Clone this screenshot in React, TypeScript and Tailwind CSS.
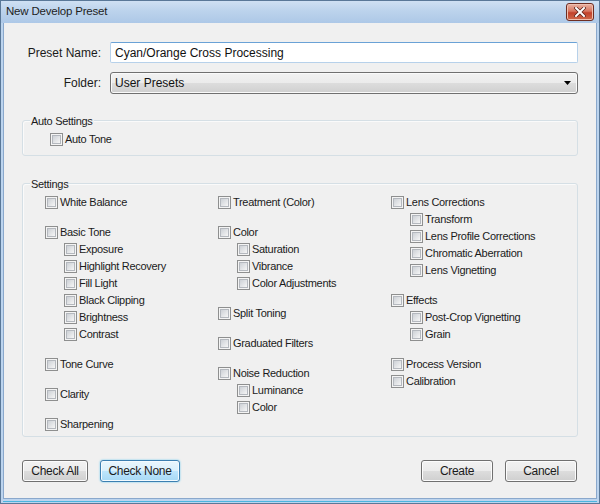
import React from "react";

function Box() {
  return (
    <span className="block w-[13px] h-[13px] shrink-0 border border-[#8e8f8f] bg-[#f4f4f4] p-[1px]">
      <span className="block w-full h-full border border-[#b4b8be] bg-gradient-to-br from-[#cdd1d6] to-[#f6f6f6]" />
    </span>
  );
}

function Item({ label, sub }: { label: string; sub?: boolean }) {
  return (
    <div className={sub ? "flex items-center h-[17px] gap-[2px] ml-[19px]" : "flex items-center h-[17px] gap-[2px]"}>
      <Box />
      <span className="text-[11px] tracking-[-0.3px] leading-none text-[#1b1b1b] whitespace-nowrap">{label}</span>
    </div>
  );
}

function Group({ main, subs = [] }: { main: string; subs?: string[] }) {
  return (
    <div className="flex flex-col">
      <Item label={main} />
      {subs.map((s) => (
        <Item key={s} label={s} sub />
      ))}
    </div>
  );
}

function Btn({ label, w, focus }: { label: string; w: string; focus?: boolean }) {
  return (
    <button
      className={
        focus
          ? `${w} h-[22px] rounded-[3px] border border-[#3c7fb1] bg-[linear-gradient(#eaf6fd,#d9f0fc_50%,#bee6fd_50%,#a7d9f5)] shadow-[inset_0_0_0_1px_#f4fbff,0_0_2px_#5ec6f0] text-[12px] tracking-[-0.3px] text-[#1b1b1b]`
          : `${w} h-[22px] rounded-[3px] border border-[#707070] bg-[linear-gradient(#f2f2f2,#ebebeb_50%,#dddddd_50%,#cfcfcf)] shadow-[inset_0_0_0_1px_#fcfcfc] text-[12px] tracking-[-0.3px] text-[#1b1b1b]`
      }
    >
      {label}
    </button>
  );
}

export default function App() {
  return (
    <div className="w-[600px] h-[504px] flex flex-col bg-[#bcd4ee] border border-[#5a7898] font-['Liberation_Sans',Arial,sans-serif] overflow-hidden">
      {/* title bar */}
      <div className="h-[22px] shrink-0 flex items-center pl-[5px] pr-[5px] bg-[linear-gradient(#cfe0f3,#bcd3ec_45%,#adc8e7)]">
        <span className="text-[11.5px] text-[#1e1e1e] tracking-[-0.2px]">New Develop Preset</span>
        <div className="ml-auto w-[28px] h-[18px] rounded-[3px] border border-[#6e2d22] bg-[linear-gradient(#eab3a4,#d7755f_45%,#c2412a_55%,#cf6a4c)] flex items-center justify-center shadow-[inset_0_0_0_1px_#f0c0b0]">
          <svg width="12" height="10" viewBox="0 0 12 10">
            <path d="M2 1 L10 9 M10 1 L2 9" stroke="#5a2018" strokeWidth="3.4" strokeLinecap="square" />
            <path d="M2 1 L10 9 M10 1 L2 9" stroke="#ffffff" strokeWidth="2" strokeLinecap="square" />
          </svg>
        </div>
      </div>

      {/* body */}
      <div className="flex-1 mx-[2px] mb-[2px] border-x border-b border-[#8aa8cc] bg-[#f0f0f0] px-[18px] pt-[19px] flex flex-col">
        {/* preset name */}
        <div className="flex items-center">
          <div className="w-[79px] text-right text-[12px] text-[#1b1b1b]">Preset Name:</div>
          <div className="ml-[9px] flex-1 h-[21px] rounded-[2px] border border-[#b7d1ea] border-t-[#6aa2d6] bg-white flex items-center pl-[4px] text-[12px] text-[#111]">
            Cyan/Orange Cross Processing
          </div>
        </div>
        {/* folder */}
        <div className="flex items-center mt-[9px]">
          <div className="w-[79px] text-right text-[12px] text-[#1b1b1b]">Folder:</div>
          <div className="ml-[9px] flex-1 h-[22px] rounded-[3px] border border-[#707070] bg-[linear-gradient(#f2f2f2,#ebebeb_50%,#dddddd_50%,#cfcfcf)] shadow-[inset_0_0_0_1px_#fafafa] flex items-center pl-[4px] pr-[6px] text-[12px] text-[#111]">
            <span>User Presets</span>
            <svg className="ml-auto" width="7" height="4" viewBox="0 0 7 4">
              <polygon points="0,0 7,0 3.5,4" fill="#000" />
            </svg>
          </div>
        </div>

        {/* auto settings */}
        <div className="relative mt-[26px] h-[36px] rounded-[3px] border border-[#d5dfe5] shadow-[inset_1px_1px_0_#fafafa] pl-[27px] pt-[10px]">
          <span className="absolute left-[7px] top-[-8px] px-[1px] bg-[#f0f0f0] text-[11px] tracking-[-0.3px] text-[#1b1b1b]">Auto Settings</span>
          <Item label="Auto Tone" />
        </div>

        {/* settings */}
        <div className="relative mt-[27px] h-[254px] rounded-[3px] border border-[#d5dfe5] shadow-[inset_1px_1px_0_#fafafa] pl-[22px] pt-[10px] grid grid-cols-[173px_173px_1fr]">
          <span className="absolute left-[7px] top-[-8px] px-[1px] bg-[#f0f0f0] text-[11px] tracking-[-0.3px] text-[#1b1b1b]">Settings</span>
          <div className="flex flex-col gap-[13px]">
            <Group main="White Balance" />
            <Group main="Basic Tone" subs={["Exposure", "Highlight Recovery", "Fill Light", "Black Clipping", "Brightness", "Contrast"]} />
            <Group main="Tone Curve" />
            <Group main="Clarity" />
            <Group main="Sharpening" />
          </div>
          <div className="flex flex-col gap-[13px]">
            <Group main="Treatment (Color)" />
            <Group main="Color" subs={["Saturation", "Vibrance", "Color Adjustments"]} />
            <Group main="Split Toning" />
            <Group main="Graduated Filters" />
            <Group main="Noise Reduction" subs={["Luminance", "Color"]} />
          </div>
          <div className="flex flex-col gap-[13px]">
            <Group main="Lens Corrections" subs={["Transform", "Lens Profile Corrections", "Chromatic Aberration", "Lens Vignetting"]} />
            <Group main="Effects" subs={["Post-Crop Vignetting", "Grain"]} />
            <div className="flex flex-col">
              <Item label="Process Version" />
              <Item label="Calibration" />
            </div>
          </div>
        </div>

        {/* buttons */}
        <div className="mt-[23px] flex items-center">
          <div className="flex gap-[12px]">
            <Btn label="Check All" w="w-[66px]" />
            <Btn label="Check None" w="w-[80px]" focus />
          </div>
          <div className="ml-auto flex gap-[12px] mr-[1px]">
            <Btn label="Create" w="w-[72px]" />
            <Btn label="Cancel" w="w-[72px]" />
          </div>
        </div>
      </div>
      <div className="h-[1px] bg-[#4ab4de] mx-[2px] mb-[1px] shrink-0" />
    </div>
  );
}
